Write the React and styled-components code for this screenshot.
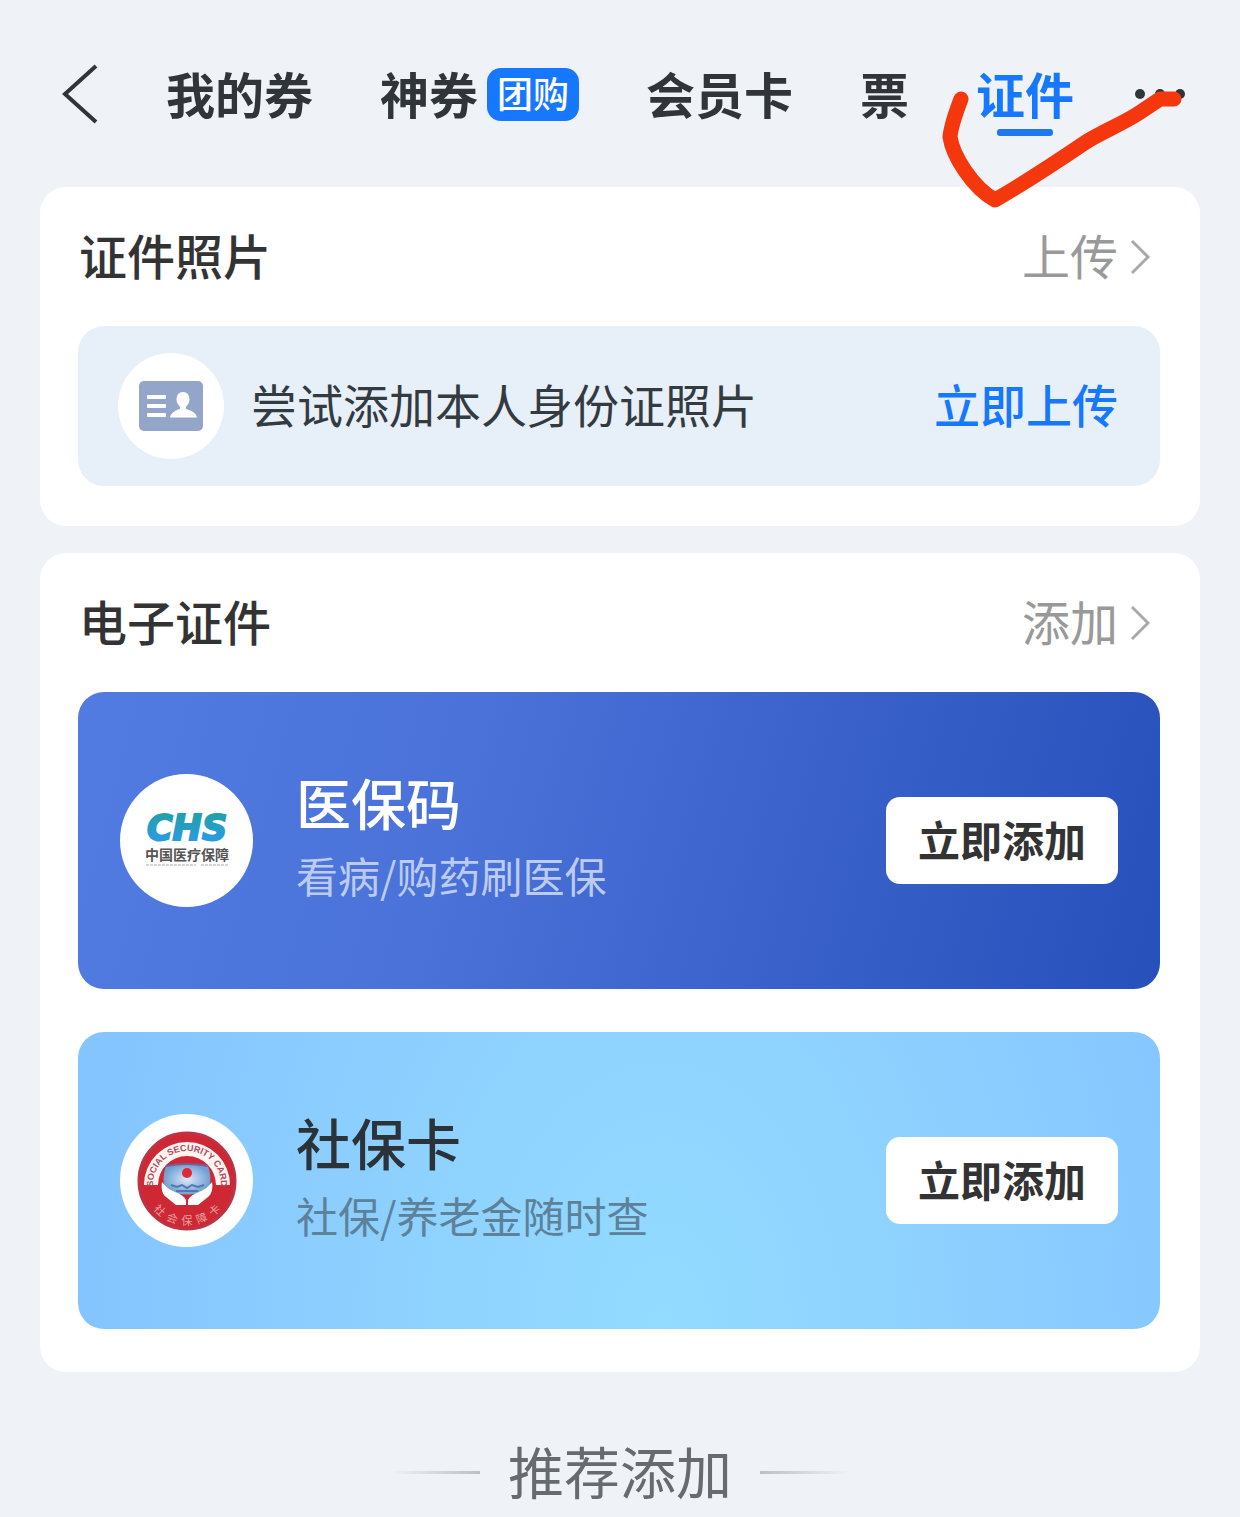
import React from "react";
import styled, { createGlobalStyle } from "styled-components";

const tabs = [
  { name: "我的券" },
  { name: "神券", badge: "团购" },
  { name: "会员卡" },
  { name: "票" },
  { name: "证件", active: true },
];

const ChevronRight = () => (
  <svg width="20" height="36" viewBox="0 0 20 36" fill="none" aria-hidden="true">
    <path d="M2 2L18 18L2 34" stroke="#a9a9a9" strokeWidth="3" />
  </svg>
);

const IdCardIcon = () => (
  <svg width="66" height="50" viewBox="0 0 66 50" aria-hidden="true">
    <rect x="1" y="0" width="64" height="50" rx="5" fill="#93a6c9" />
    <g fill="#fff">
      <rect x="9" y="14" width="19" height="4" rx="1" />
      <rect x="9" y="23" width="19" height="4" rx="1" />
      <rect x="9" y="32" width="19" height="4" rx="1" />
      <path d="M45 11c4 0 6.500 3 6.500 7.500c0 3-1.500 5.500-3.500 7v2.500c5 1.500 10 3.500 11 8.500H32c1-5 5.500-7 10-8.500v-2.500c-2-1.500-3.500-4-3.500-7c0-4.500 2.500-7.500 6.500-7.500z" />
    </g>
  </svg>
);

const ChsLogo = () => (
  <svg width="133" height="133" viewBox="0 0 133 133" aria-hidden="true">
    <defs>
      <linearGradient id="chs" x1="0" y1="0" x2="0" y2="1">
        <stop offset="0.2" stopColor="#22a0ae" />
        <stop offset="0.8" stopColor="#2a9be0" />
      </linearGradient>
    </defs>
    <circle cx="66.500" cy="66.500" r="66.500" fill="#fff" />
    <LogoLetters x="67" y="66" textAnchor="middle">CHS</LogoLetters>
    <LogoName x="67" y="86" textAnchor="middle">中国医疗保障</LogoName>
    <path d="M26 91H76M81 91H108" stroke="#d8d4d4" strokeWidth="2" strokeDasharray="3 1" />
  </svg>
);

const SocialCardLogo = () => (
  <svg width="133" height="133" viewBox="0 0 133 133" aria-hidden="true">
    <defs>
      <path id="arcTop" d="M33 71A34 34 0 1 1 101 71" />
      <path id="arcBottom" d="M23 67A44 44 0 0 0 111 67" />
      <radialGradient id="cardFace">
        <stop offset="0" stopColor="#dde9f8" />
        <stop offset="1" stopColor="#6f9fd2" />
      </radialGradient>
    </defs>
    <circle cx="66.500" cy="66.500" r="66.500" fill="#fff" />
    <circle cx="67" cy="67" r="49" fill="#ce2834" />
    <path d="M24 71A43 43 0 1 1 110 71H96A29 29 0 1 0 38 71Z" fill="#fff4f0" />
    <circle cx="67" cy="67" r="48" fill="none" stroke="#bd3343" strokeWidth="3" />
    <path d="M46 52Q67 48 88 52Q93 65 88 77Q67 84 46 77Q41 65 46 52Z" fill="url(#cardFace)" />
    <path d="M46 52Q67 48 88 52" stroke="#7e5b96" strokeWidth="2" fill="none" />
    <path d="M51 71l6 2 5-2 5 3 5-3 6 2 6-2M56 77h22" stroke="#4f78b5" strokeWidth="2" fill="none" />
    <circle cx="67" cy="59" r="5" fill="#dd2838" />
    <g fill="#fff">
      <path d="M42 68C41 74 42 80 46 83L56 91L66 91V86C64 82 60 80 55 78C50 76 46 73 42 68Z" />
      <path d="M92 68C93 74 92 80 88 83L78 91L68 91V86C70 82 74 80 79 78C84 76 88 73 92 68Z" />
    </g>
    <ArcLatin>
      <textPath href="#arcTop" startOffset="50%" textAnchor="middle">SOCIAL SECURITY CARD</textPath>
    </ArcLatin>
    <ArcChinese>
      <textPath href="#arcBottom" startOffset="50%" textAnchor="middle">{"社\u2002会\u2002保\u2002障\u2002卡"}</textPath>
    </ArcChinese>
  </svg>
);

const cards = [
  {
    name: "医保码",
    description: "看病/购药刷医保",
    logo: <ChsLogo />,
    color: "#fff",
    subColor: "#bccbf3",
    background: "linear-gradient(105deg, #527ce1 0%, #4a72d9 35%, #3a62ca 65%, #2850bb 100%)",
  },
  {
    name: "社保卡",
    description: "社保/养老金随时查",
    logo: <SocialCardLogo />,
    color: "#2b3238",
    subColor: "#5d8199",
    background: "radial-gradient(ellipse 55% 300% at 54% 100%, #93dbff 0%, #8dd0ff 50%, #84c4ff 100%)",
  },
];

const App = () => {
  return (
    <>
      <GlobalStyle />
      <Header>
        <BackButton aria-label="返回">
          <svg width="36" height="60" viewBox="0 0 36 60" fill="none">
            <path d="M34 2L3 30L34 58" stroke="#30353a" strokeWidth="4" />
          </svg>
        </BackButton>
        <TabList>
          {tabs.map((tab) => (
            <Tab key={tab.name} href="#" $active={tab.active}>
              <TabName>{tab.name}</TabName>
              {tab.badge && <Badge>{tab.badge}</Badge>}
            </Tab>
          ))}
        </TabList>
        <MoreButton aria-label="更多">
          <svg width="52" height="12" viewBox="0 0 52 12" fill="#30353a">
            <circle cx="6" cy="6" r="5" />
            <circle cx="26" cy="6" r="5" />
            <circle cx="46" cy="6" r="5" />
          </svg>
        </MoreButton>
        <CheckMark width="240" height="120" viewBox="0 0 240 120" fill="none" aria-hidden="true">
          <path
            d="M19 9C14 22 9 36 8 47C11 66 30 97 53 110C84 92 113 73 144 52C162 41 180 34 197 23C206 17 212 13 218 9H232"
            stroke="#f5370e"
            strokeWidth="15"
            strokeLinecap="round"
            strokeLinejoin="round"
          />
        </CheckMark>
      </Header>

      <Main>
        <Section>
          <SectionHeader>
            <SectionTitle>证件照片</SectionTitle>
            <SectionLink href="#">
              <LinkText>上传</LinkText>
              <ChevronRight />
            </SectionLink>
          </SectionHeader>
          <Notice>
            <NoticeIcon>
              <IdCardIcon />
            </NoticeIcon>
            <NoticeText>尝试添加本人身份证照片</NoticeText>
            <UploadButton>立即上传</UploadButton>
          </Notice>
        </Section>

        <Section>
          <SectionHeader>
            <SectionTitle>电子证件</SectionTitle>
            <SectionLink href="#">
              <LinkText>添加</LinkText>
              <ChevronRight />
            </SectionLink>
          </SectionHeader>
          <CardList>
            {cards.map((card) => (
              <Card key={card.name} $background={card.background}>
                {card.logo}
                <CardInfo>
                  <CardName $color={card.color}>{card.name}</CardName>
                  <CardDescription $color={card.subColor}>{card.description}</CardDescription>
                </CardInfo>
                <AddButton>立即添加</AddButton>
              </Card>
            ))}
          </CardList>
        </Section>
      </Main>

      <Recommend>
        <Line $direction="left" />
        <RecommendTitle>推荐添加</RecommendTitle>
        <Line $direction="right" />
      </Recommend>
    </>
  );
};

const GlobalStyle = createGlobalStyle`
  * {
    box-sizing: border-box;
  }
  body {
    margin: 0;
    background-color: #eff3f8;
    color: #30353a;
    font-family: "Noto Sans CJK SC", sans-serif;
  }
  button {
    padding: 0;
    border: 0;
    background-color: transparent;
    font-family: inherit;
    cursor: pointer;
  }
  a {
    color: inherit;
    text-decoration: none;
  }
  svg {
    display: block;
    flex-shrink: 0;
  }
`;

const Header = styled.header`
  position: relative;
  display: flex;
  align-items: center;
  padding: 64px 54px 63px 62px;
`;

const BackButton = styled.button`
  margin-right: 68px;
`;

const TabList = styled.nav`
  display: flex;
  flex: 1;
  gap: 67px;
`;

const Tab = styled.a`
  position: relative;
  display: flex;
  align-items: center;
  height: 60px;
  color: ${({ $active }) => ($active ? "#1677ff" : "#30353a")};

  &::after {
    content: "";
    display: ${({ $active }) => ($active ? "block" : "none")};
    position: absolute;
    left: 50%;
    bottom: -12px;
    width: 56px;
    height: 7px;
    margin-left: -28px;
    border-radius: 3px;
    background-color: #1f78f0;
  }
`;

const TabName = styled.span`
  padding-bottom: 2px;
  font-size: 49px;
  font-weight: 700;
  line-height: 60px;
  white-space: nowrap;
`;

const Badge = styled.span`
  margin-left: 9px;
  padding: 0 10px 4px;
  border-radius: 14px;
  background-color: #1677ff;
  color: #fff;
  font-size: 36px;
  font-weight: 500;
  line-height: 49px;
`;

const MoreButton = styled.button``;

const CheckMark = styled.svg`
  position: absolute;
  right: 58px;
  top: 90px;
  pointer-events: none;
`;

const Main = styled.main`
  display: flex;
  flex-direction: column;
  gap: 27px;
  padding: 0 40px;
`;

const Section = styled.section`
  padding: 0 40px 40px 38px;
  border-radius: 26px;
  background-color: #fff;
`;

const SectionHeader = styled.div`
  display: flex;
  justify-content: space-between;
  align-items: center;
  height: 139px;
  padding: 0 10px 0 1px;
`;

const SectionTitle = styled.h2`
  margin: 0;
  padding-bottom: 6px;
  font-size: 48px;
  font-weight: 500;
  color: #333;
`;

const SectionLink = styled.a`
  display: flex;
  align-items: center;
  gap: 12px;
`;

const LinkText = styled.span`
  padding-bottom: 6px;
  font-size: 48px;
  color: #999;
`;

const Notice = styled.div`
  display: flex;
  align-items: center;
  padding: 27px 42px 27px 40px;
  border-radius: 26px;
  background-color: #e7eff9;
`;

const NoticeIcon = styled.div`
  display: flex;
  justify-content: center;
  align-items: center;
  width: 106px;
  height: 106px;
  margin-right: 27px;
  border-radius: 50%;
  background-color: #fff;
`;

const NoticeText = styled.div`
  flex: 1;
  padding-bottom: 6px;
  font-size: 46px;
  color: #333a40;
`;

const UploadButton = styled.button`
  padding-bottom: 6px;
  font-size: 46px;
  font-weight: 500;
  color: #1677ff;
`;

const CardList = styled.div`
  display: flex;
  flex-direction: column;
  gap: 43px;
  padding-bottom: 3px;
`;

const Card = styled.article`
  display: flex;
  align-items: center;
  min-height: 297px;
  padding: 0 42px;
  border-radius: 26px;
  background: ${({ $background }) => $background};
`;

const CardInfo = styled.div`
  flex: 1;
  padding: 0 0 6px 43px;
  line-height: 74px;
`;

const CardName = styled.h3`
  margin: 0;
  font-size: 55px;
  font-weight: 500;
  color: ${({ $color }) => $color};
`;

const CardDescription = styled.div`
  font-size: 42px;
  color: ${({ $color }) => $color};
`;

const AddButton = styled.button`
  padding: 0 32px 4px;
  border-radius: 14px;
  background-color: #fff;
  color: #333;
  font-size: 42px;
  font-weight: 700;
  line-height: 83px;
`;

const LogoLetters = styled.text`
  fill: url(#chs);
  stroke: url(#chs);
  stroke-width: 2px;
  font-family: "DejaVu Sans", sans-serif;
  font-size: 35px;
  font-style: italic;
  font-weight: 700;
`;

const LogoName = styled.text`
  fill: #555;
  font-size: 14px;
  font-weight: 700;
`;

const ArcLatin = styled.text`
  fill: #b04a60;
  font-family: "Liberation Sans", sans-serif;
  font-size: 9px;
  font-weight: 700;
`;

const ArcChinese = styled.text`
  fill: #eba0a0;
  font-size: 11px;
`;

const Recommend = styled.div`
  display: flex;
  justify-content: center;
  align-items: center;
  gap: 28px;
  padding-top: 58px;
`;

const RecommendTitle = styled.h2`
  margin: 0;
  padding-bottom: 4px;
  color: #666b70;
  font-size: 56px;
  font-weight: 400;
  line-height: 80px;
`;

const Line = styled.span`
  width: 90px;
  height: 3px;
  background: linear-gradient(to ${({ $direction }) => $direction}, #bcbfc3, #eff3f8);
`;

export default App;
